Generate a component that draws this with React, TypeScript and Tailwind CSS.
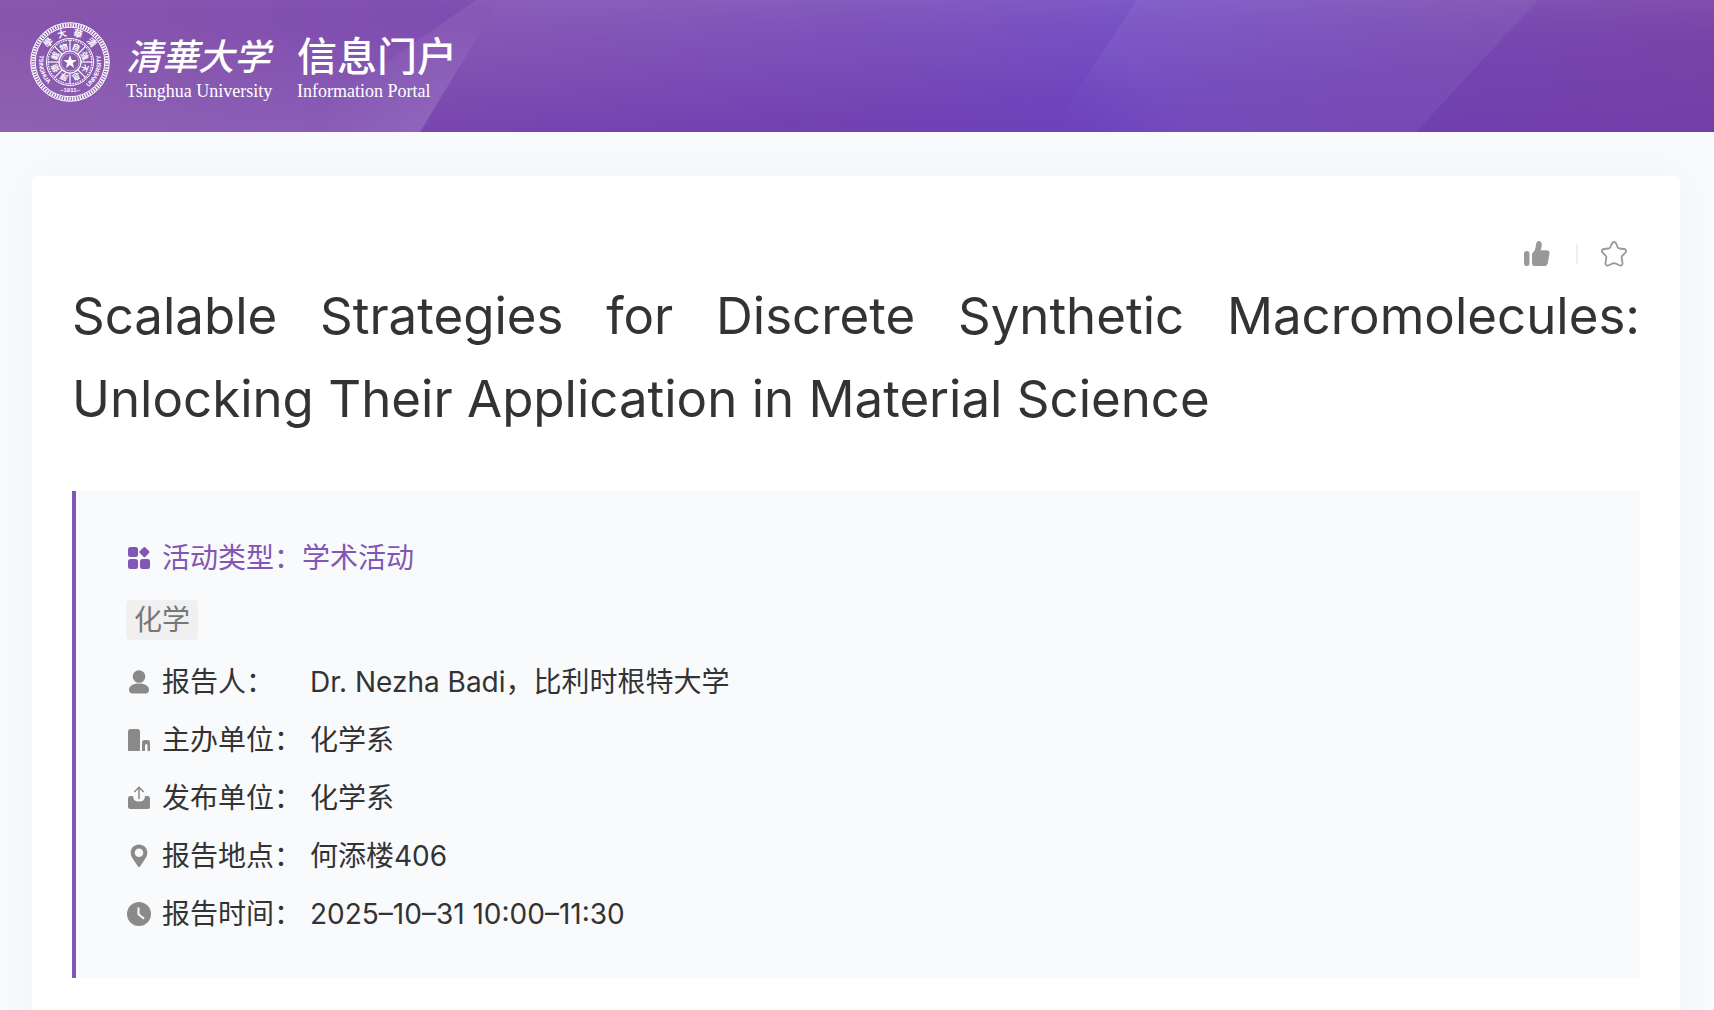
import React from "react";

const LATIN = "font-[Inter,'Noto_Sans_CJK_SC',sans-serif]";

function HeaderBackdrop() {
  return (
    <svg className="absolute inset-0 h-full w-full" viewBox="0 0 1714 132" preserveAspectRatio="none" aria-hidden="true">
      <defs>
        <linearGradient id="base" x1="0" y1="0" x2="1" y2="0">
          <stop offset="0" stopColor="#8552a9" />
          <stop offset="0.26" stopColor="#7b49af" />
          <stop offset="0.5" stopColor="#7647b6" />
          <stop offset="0.65" stopColor="#7048c0" />
          <stop offset="0.86" stopColor="#7545b0" />
          <stop offset="1" stopColor="#7843a8" />
        </linearGradient>
        <linearGradient id="shade" x1="0" y1="0" x2="0" y2="1">
          <stop offset="0" stopColor="#ffffff" stopOpacity="0.04" />
          <stop offset="0.4" stopColor="#5a20a0" stopOpacity="0" />
          <stop offset="1" stopColor="#5a20a0" stopOpacity="0.16" />
        </linearGradient>
        <linearGradient id="leftGlow" gradientUnits="userSpaceOnUse" x1="0" y1="10" x2="0" y2="132">
          <stop offset="0" stopColor="#ffffff" stopOpacity="0" />
          <stop offset="1" stopColor="#ffffff" stopOpacity="0.13" />
        </linearGradient>
        <linearGradient id="wedge" gradientUnits="userSpaceOnUse" x1="320" y1="0" x2="440" y2="0">
          <stop offset="0" stopColor="#ffffff" stopOpacity="0" />
          <stop offset="1" stopColor="#ffffff" stopOpacity="0.07" />
        </linearGradient>
        <linearGradient id="band" gradientUnits="userSpaceOnUse" x1="700" y1="0" x2="712" y2="132">
          <stop offset="0" stopColor="#ffffff" stopOpacity="0.08" />
          <stop offset="1" stopColor="#ffffff" stopOpacity="0" />
        </linearGradient>
        <linearGradient id="rightBand" gradientUnits="userSpaceOnUse" x1="1060" y1="125" x2="1130" y2="60">
          <stop offset="0" stopColor="#ffffff" stopOpacity="0" />
          <stop offset="1" stopColor="#ffffff" stopOpacity="0.05" />
        </linearGradient>
      </defs>
      <rect width="1714" height="132" fill="url(#base)" />
      <rect width="1714" height="132" fill="url(#shade)" />
      <path d="M0 0H500L420 132H0Z" fill="url(#leftGlow)" />
      <path d="M476 0L300 122V132H420L500 0Z" fill="url(#wedge)" />
      <path d="M500 0H1714V132H420Z" fill="url(#band)" />
      <path d="M1137 0H1538L1416 132H1050Z" fill="url(#rightBand)" />
    </svg>
  );
}

function Seal() {
  const petals = Array.from({ length: 8 }, (_, i) => i * 45);
  return (
    <svg className="h-20 w-20 shrink-0" viewBox="0 0 80 80" role="img" aria-label="清华大学校徽">
      <defs>
        <path id="sealLow" d="M9.800 33A31 31 0 1 0 70.200 33" />
      </defs>
      <g fill="none" stroke="#fff">
        <circle cx="40" cy="40" r="39.300" strokeWidth="1" />
        <circle cx="40" cy="40" r="34.800" strokeWidth="1" />
        <circle cx="40" cy="40" r="37" strokeWidth="3.600" strokeDasharray="1.500 1.100" />
        <circle cx="40" cy="40" r="23.500" strokeWidth="1" />
        <circle cx="40" cy="40" r="21.800" strokeWidth="1.200" strokeDasharray="1.500 1" />
        <circle cx="40" cy="40" r="11" strokeWidth="1.200" />
        <circle cx="40" cy="40" r="9" strokeWidth="0.500" />
        {petals.map((a) => (
          <path key={a} d="M40 29V18" strokeWidth="1.200" transform={`rotate(${a} 40 40)`} />
        ))}
      </g>
      <path fill="#fff" d="M40 33l1.700 4.900h5.200l-4.200 3.200 1.500 5-4.200-3-4.200 3 1.500-5-4.200-3.200h5.200z" />
      <g fill="#fff" fontFamily="'Noto Sans CJK TC', sans-serif" fontWeight="700">
        {"自強不息厚德載物".split("").map((g, i) => (
          <text key={g} x="40" y="27" fontSize="8" textAnchor="middle" transform={`rotate(${i * 45 + 22.5} 40 40)`}>
            {g}
          </text>
        ))}
        {"學大華清".split("").map((g, i) => (
          <text key={g} x="40" y="14" fontSize="9" textAnchor="middle" transform={`rotate(${[-48, -16, 16, 48][i]} 40 40)`}>
            {g}
          </text>
        ))}
      </g>
      <g fill="#fff" fontFamily="'Liberation Sans', sans-serif" fontWeight="700" fontSize="6">
        <text>
          <textPath href="#sealLow" startOffset="0%">TSINGHUA</textPath>
        </text>
        <text textAnchor="end">
          <textPath href="#sealLow" startOffset="100%">UNIVERSITY</textPath>
        </text>
        <text x="40" y="70" textAnchor="middle">~1911~</text>
      </g>
    </svg>
  );
}

function LikeIcon() {
  return (
    <svg className="h-7 w-7" viewBox="0 0 28 28" fill="#999" aria-hidden="true">
      <rect x="0" y="11" width="5.500" height="15" rx="2.500" />
      <path d="M8 13.500c2.500-2 3.500-4.500 4-8.500.3-3 1.200-4 2.500-4 2 0 3.300 1.600 3.300 3.600 0 2-.5 3.600-1.200 5.600h6.200c1.900 0 3 1.300 2.700 3.200l-1.500 9c-.4 2.400-1.600 3.600-3.800 3.600h-9.700c-1.600 0-2.500-.9-2.500-2.500z" />
    </svg>
  );
}

function StarIcon() {
  return (
    <svg className="h-7 w-7" viewBox="0 0 28 28" fill="none" stroke="#999" strokeWidth="1.800" strokeLinejoin="round" aria-hidden="true">
      <path d="M12.100 3.200c.8-1.600 3-1.600 3.800 0l1.700 3.900c.4.8 1 1.300 1.900 1.400l4.600.5c1.900.2 2.600 2.300 1.300 3.600l-3 3c-.6.600-.9 1.400-.7 2.300l.8 5.200c.3 1.800-1.500 3-3.100 2.200l-4.300-1.900c-.7-.4-1.500-.4-2.200 0l-4.300 1.900c-1.600.8-3.400-.4-3.100-2.200l.8-5.200c.2-.9-.1-1.700-.7-2.300l-3-3C1.300 11.300 2 9.200 3.900 9l4.600-.5c.9-.1 1.500-.6 1.900-1.400z" />
    </svg>
  );
}

const ICON = "h-[26px] w-[26px] shrink-0";

function TypeIcon() {
  return (
    <svg className={ICON} viewBox="0 0 26 26" fill="#8156b4" aria-hidden="true">
      <rect x="2" y="2" width="10" height="10" rx="2.500" />
      <rect x="2" y="14" width="10" height="10" rx="2.500" />
      <rect x="14" y="14" width="10" height="10" rx="2.500" />
      <path d="M17.400 2.500q1-1 2 0l3.600 3.600q1 1 0 2l-3.600 3.600q-1 1-2 0l-3.600-3.600q-1-1 0-2z" />
    </svg>
  );
}

function PersonIcon() {
  return (
    <svg className={ICON} viewBox="0 0 26 26" fill="#8a8a8a" aria-hidden="true">
      <circle cx="13" cy="7.500" r="6.300" />
      <path d="M3 21c0-4 4-6.500 10-6.500S23 17 23 21c0 2-1.300 3.500-3.500 3.500h-13C4.300 24.500 3 23 3 21z" />
    </svg>
  );
}

function BuildingIcon() {
  return (
    <svg className={ICON} viewBox="0 0 26 26" fill="#8a8a8a" aria-hidden="true">
      <path d="M2 24V4.500Q2 2 4.500 2h7Q14 2 14 4.500V24z" />
      <path d="M16 24v-8.500q0-2.500 2.500-2.500h3q2.500 0 2.500 2.500V24h-2.500v-5.500q0-1.500-1.200-1.500t-1.300 1.500V24z" />
    </svg>
  );
}

function PublishIcon() {
  return (
    <svg className={ICON} viewBox="0 0 26 26" fill="#8a8a8a" aria-hidden="true">
      <path d="M4.500 11H7q0 5.500 6 5.500t6-5.500h2.500Q24 11 24 13.500v8q0 2.500-2.500 2.500h-17Q2 24 2 21.500v-8Q2 11 4.500 11z" />
      <path d="M13 14V2.500M8.300 7L13 2.300 17.700 7" fill="none" stroke="#8a8a8a" strokeWidth="1.500" />
    </svg>
  );
}

function PinIcon() {
  return (
    <svg className={ICON} viewBox="0 0 26 26" fill="#8a8a8a" aria-hidden="true">
      <path fillRule="evenodd" d="M13 1.500c4.800 0 8.300 3.600 8.300 8.200 0 2.300-.9 4.200-2.300 6.300L14 23.600q-1 1.300-2 0L7 16c-1.400-2.100-2.300-4-2.300-6.300 0-4.600 3.500-8.200 8.300-8.200zm0 4a4.300 4.300 0 1 0 0 8.600 4.300 4.300 0 0 0 0-8.600z" />
    </svg>
  );
}

function ClockIcon() {
  return (
    <svg className={ICON} viewBox="0 0 26 26" aria-hidden="true">
      <circle cx="13" cy="13" r="12" fill="#8a8a8a" />
      <path d="M12.500 6.500v6.800l5.500 4.400" fill="none" stroke="#f9fafc" strokeWidth="2" />
    </svg>
  );
}

const rows = [
  { icon: <PersonIcon />, label: "报告人：", value: "Dr. Nezha Badi，比利时根特大学" },
  { icon: <BuildingIcon />, label: "主办单位：", value: "化学系" },
  { icon: <PublishIcon />, label: "发布单位：", value: "化学系" },
  { icon: <PinIcon />, label: "报告地点：", value: "何添楼406" },
  { icon: <ClockIcon />, label: "报告时间：", value: "2025–10–31 10:00–11:30" },
];

export default function App() {
  return (
    <div className={`${LATIN} min-h-screen overflow-hidden bg-[#f9fafc] text-[#333]`}>
      <header className="relative h-[132px]">
        <HeaderBackdrop />
        <div className="relative flex items-center px-[30px] pt-[22px] text-white">
          <Seal />
          <div className="ml-4 flex w-[171px] flex-col">
            <span className="font-['Noto_Sans_CJK_SC',sans-serif] text-[36px] leading-[58px] font-medium whitespace-nowrap italic">清華大学</span>
            <span className="font-['Liberation_Serif',serif] text-[18px] leading-4 whitespace-nowrap">Tsinghua University</span>
          </div>
          <div className="flex flex-col">
            <span className="font-['Noto_Sans_CJK_SC',sans-serif] text-[40px] leading-[58px] font-medium whitespace-nowrap">信息门户</span>
            <span className="font-['Liberation_Serif',serif] text-[18px] leading-4 whitespace-nowrap">Information Portal</span>
          </div>
        </div>
      </header>

      <main className="mx-8 mt-11 rounded-md bg-white px-10 pt-16 pb-16 shadow-[0_0_40px_rgba(0,0,0,0.04)] mr-[34px]">
        <div className="flex items-center justify-end pr-3">
          <button type="button" aria-label="点赞"><LikeIcon /></button>
          <span className="ml-6 h-5 w-0.5 bg-[#eee]" />
          <button type="button" className="ml-[22px]" aria-label="收藏"><StarIcon /></button>
        </div>
        <h1 className="mt-1.5 text-justify text-[51px] leading-[83px]">
          Scalable Strategies for Discrete Synthetic Macromolecules: Unlocking Their Application in Material Science
        </h1>

        <section className="mt-[51px] border-l-4 border-[#8156b4] bg-[#f9fafc] px-[50px] pt-[38px] pb-[35px] text-[28px]">
          <div className="flex h-[58px] items-center text-[#8156b4]">
            <TypeIcon />
            <span className="ml-2.5">活动类型：学术活动</span>
          </div>
          <div className="flex h-[66px] items-center">
            <span className="rounded bg-[#f0f0f0] px-2 leading-10 text-[#777]">化学</span>
          </div>
          <dl>
            {rows.map((r) => (
              <div key={r.label} className="flex h-[58px] items-center">
                {r.icon}
                <dt className="ml-2.5 w-[148px] whitespace-nowrap">{r.label}</dt>
                <dd>{r.value}</dd>
              </div>
            ))}
          </dl>
        </section>
      </main>
    </div>
  );
}
